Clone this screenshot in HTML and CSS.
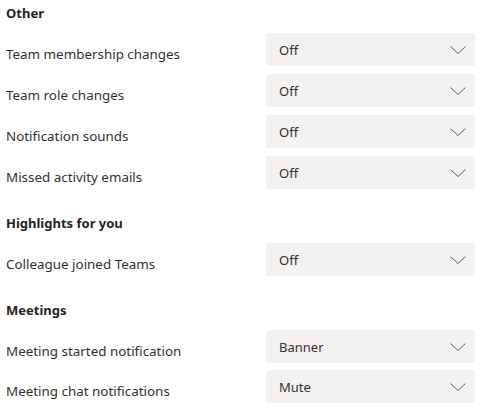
FILE: index.html
```html
<!DOCTYPE html>
<html>
<head>
<meta charset="utf-8">
<link rel="stylesheet" href="styles.css">
</head>
<body>
<div class="page">
  <section class="section">
    <h2 class="title">Other</h2>
    <div class="row"><span class="label">Team membership changes</span><div class="select"><span>Off</span><svg class="chev" viewBox="0 0 16 8"><path d="M0.5 0.5 L8 7.5 L15.5 0.5"/></svg></div></div>
    <div class="row"><span class="label">Team role changes</span><div class="select"><span>Off</span><svg class="chev" viewBox="0 0 16 8"><path d="M0.5 0.5 L8 7.5 L15.5 0.5"/></svg></div></div>
    <div class="row"><span class="label">Notification sounds</span><div class="select"><span>Off</span><svg class="chev" viewBox="0 0 16 8"><path d="M0.5 0.5 L8 7.5 L15.5 0.5"/></svg></div></div>
    <div class="row"><span class="label">Missed activity emails</span><div class="select"><span>Off</span><svg class="chev" viewBox="0 0 16 8"><path d="M0.5 0.5 L8 7.5 L15.5 0.5"/></svg></div></div>
  </section>
  <section class="section">
    <h2 class="title">Highlights for you</h2>
    <div class="row"><span class="label">Colleague joined Teams</span><div class="select"><span>Off</span><svg class="chev" viewBox="0 0 16 8"><path d="M0.5 0.5 L8 7.5 L15.5 0.5"/></svg></div></div>
  </section>
  <section class="section">
    <h2 class="title">Meetings</h2>
    <div class="row"><span class="label">Meeting started notification</span><div class="select"><span>Banner</span><svg class="chev" viewBox="0 0 16 8"><path d="M0.5 0.5 L8 7.5 L15.5 0.5"/></svg></div></div>
    <div class="row tight"><span class="label">Meeting chat notifications</span><div class="select"><span>Mute</span><svg class="chev" viewBox="0 0 16 8"><path d="M0.5 0.5 L8 7.5 L15.5 0.5"/></svg></div></div>
  </section>
</div>
</body>
</html>
```
FILE: styles.css
```css
html, body {
  margin: 0;
  padding: 0;
  background: #ffffff;
}
body {
  font-family: "Noto Sans", "Open Sans", sans-serif;
  font-size: 13px;
  color: #252423;
}
.page {
  padding: 3px 6px 0 6px;
  display: flex;
  flex-direction: column;
  gap: 24px;
}
.section {
  display: flex;
  flex-direction: column;
  gap: 8px;
}
.title {
  margin: 0 0 2px 0;
  font-size: 13px;
  font-weight: 700;
  line-height: 20px;
}
.row {
  display: flex;
  align-items: center;
  justify-content: space-between;
  height: 33px;
}
.row.tight {
  margin-top: -1px;
}
.label {
  padding-top: 8px;
  font-size: 13.4px;
  color: #323130;
}
.select {
  width: 209px;
  height: 33px;
  box-sizing: border-box;
  background: #f3f2f1;
  border-radius: 3px;
  display: flex;
  align-items: center;
  justify-content: space-between;
  padding: 0 9px 0 13px;
  color: #323130;
}
.chev {
  width: 16px;
  height: 8px;
  fill: none;
  stroke: #605e5c;
  stroke-width: 1;
}
```
